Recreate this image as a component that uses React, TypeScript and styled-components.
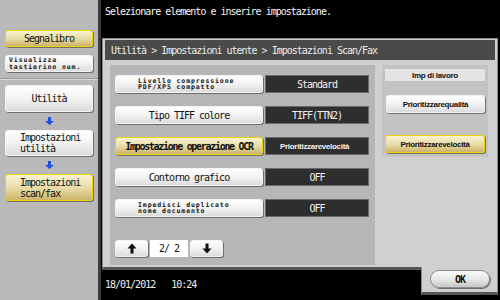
import React from 'react';
import styled, { createGlobalStyle, css } from 'styled-components';

const GlobalStyle = createGlobalStyle`
  html, body {
    margin: 0;
    padding: 0;
    background: #000;
  }
  #root {
    width: 500px;
    height: 300px;
    overflow: hidden;
  }
`;

const mono = css`
  font-family: "DejaVu Sans Mono", monospace;
  font-size: 10px;
  letter-spacing: -1px;
`;

const tiny = css`
  font-family: "DejaVu Sans Mono", monospace;
  font-size: 6.5px;
  font-weight: bold;
  line-height: 6.5px;
  letter-spacing: 0.9px;
`;

const Screen = styled.div`
  display: flex;
  width: 500px;
  height: 300px;
  background: #000;
`;

const Sidebar = styled.div`
  width: 101px;
  box-sizing: border-box;
  border-right: 3px solid #3c3c3c;
  background: #b9b9b9;
  display: flex;
  flex-direction: column;
  padding-top: 30px;
`;

const SideGroup = styled.div`
  display: flex;
  flex-direction: column;
  align-items: center;
  gap: 8px;
  padding: 0 5px 6px 5px;
`;

const Divider = styled.div`
  height: 0;
  border-top: 1px solid #999;
  border-bottom: 1px solid #d6d6d6;
  margin-bottom: 5px;
`;

interface BtnProps {
  $active?: boolean;
}

const btnSkin = css<BtnProps>`
  box-sizing: border-box;
  border-radius: 3px;
  color: #111;
  border: 1px solid ${(p) => (p.$active ? '#f0d400' : '#f4f4f4')};
  background: ${(p) =>
    p.$active
      ? 'linear-gradient(#faf3d2, #e6d9a4 55%, #cdb36a)'
      : 'linear-gradient(#ffffff, #f2f2f2 50%, #dcdcdc)'};
  box-shadow: 1px 1px 0 #6e6e6e;
`;

const SideButton = styled.div<BtnProps & { $h: number; $left?: boolean }>`
  ${btnSkin};
  ${mono};
  width: 88px;
  height: ${(p) => p.$h}px;
  display: flex;
  flex-direction: column;
  justify-content: center;
  align-items: ${(p) => (p.$left ? 'flex-start' : 'center')};
  padding-left: ${(p) => (p.$left ? '14px' : '0')};
  line-height: 11px;
`;

const TinyText = styled.div`
  ${tiny};
  text-align: left;
  width: 80px;
`;

const FlowArrow = styled.svg`
  display: block;
  margin: -3px 0;
`;

const Main = styled.div`
  flex: 1;
  display: flex;
  flex-direction: column;
  padding-left: 1px;
  padding-right: 2px;
`;

const Message = styled.div`
  ${mono};
  color: #f4f4f4;
  height: 38px;
  padding: 6px 0 0 3px;
  box-sizing: border-box;
`;

const Dialog = styled.div`
  display: flex;
  flex-direction: column;
`;

const Panel = styled.div`
  height: 232px;
  box-sizing: border-box;
  background: #d0d0d0;
  border: 1px solid #8a8a8a;
  border-bottom: 3px solid #555;
  padding: 1px 1px 0 1px;
  display: flex;
  flex-direction: column;
`;

const TitleBar = styled.div`
  ${mono};
  height: 20px;
  background: #4a4a4a;
  color: #ececec;
  display: flex;
  align-items: center;
  padding-left: 6px;
  margin: 0 1px;
`;

const Body = styled.div`
  display: flex;
  gap: 7px;
  padding: 5px 0 0 6px;
`;

const ListPanel = styled.div`
  width: 265px;
  height: 200px;
  box-sizing: border-box;
  background: #b6b6b6;
  padding: 10px 6px 0 5px;
  display: flex;
  flex-direction: column;
  gap: 13px;
`;

const Row = styled.div`
  display: flex;
  gap: 2px;
  height: 18px;
`;

const ItemButton = styled.div<BtnProps>`
  ${btnSkin};
  ${mono};
  width: 148px;
  display: flex;
  align-items: center;
  justify-content: center;
  flex-direction: column;
  font-weight: ${(p) => (p.$active ? 'bold' : 'normal')};
  letter-spacing: ${(p) => (p.$active ? '-1.3px' : '-1px')};
`;

const ItemTiny = styled.div`
  ${tiny};
  text-align: left;
  width: 104px;
  padding-left: 2px;
`;

const sansBold = css`
  font-family: "Liberation Sans", sans-serif;
  font-size: 8px;
  font-weight: bold;
  letter-spacing: -0.3px;
`;

const Value = styled.div<{ $sans?: boolean }>`
  width: 104px;
  box-sizing: border-box;
  background: #2e2e2e;
  border: 1px solid #6a6a6a;
  color: #f2f2f2;
  display: flex;
  align-items: center;
  justify-content: ${(p) => (p.$sans ? 'flex-start' : 'center')};
  padding-left: ${(p) => (p.$sans ? '14px' : '0')};
  ${(p) =>
    p.$sans
      ? css`
          ${sansBold};
          word-spacing: -2px;
        `
      : mono};
`;

const Pager = styled.div`
  display: flex;
  gap: 2px;
  height: 17px;
  margin-top: 10px;
`;

const PageButton = styled.div`
  ${btnSkin};
  width: 33px;
  display: flex;
  align-items: center;
  justify-content: center;
`;

const PageCount = styled.div`
  ${mono};
  width: 38px;
  background: #fff;
  display: flex;
  align-items: center;
  justify-content: center;
  color: #111;
`;

const JobPanel = styled.div`
  width: 106px;
  height: 92px;
  box-sizing: border-box;
  background: #c3c3c3;
  padding: 4px 3px;
  display: flex;
  flex-direction: column;
`;

const JobLabel = styled.div`
  ${sansBold};
  height: 12px;
  background: #e4e4e4;
  display: flex;
  align-items: center;
  justify-content: center;
  color: #111;
`;

const JobButton = styled.div<BtnProps & { $gap: number }>`
  ${btnSkin};
  ${sansBold};
  word-spacing: -2px;
  height: 18px;
  margin-top: ${(p) => p.$gap}px;
  margin-left: ${(p) => (p.$active ? '0' : '1px')};
  display: flex;
  align-items: center;
  justify-content: center;
`;

const Footer = styled.div`
  display: flex;
  height: 29px;
`;

const Clock = styled.div`
  ${mono};
  flex: 1;
  color: #f0f0f0;
  display: flex;
  gap: 16px;
  padding: 9px 0 0 3px;
`;

const OkTab = styled.div`
  width: 77px;
  height: 28px;
  margin-top: -3px;
  box-sizing: border-box;
  background: #d0d0d0;
  border: 1px solid #8a8a8a;
  border-top: none;
  border-bottom: 3px solid #555;
  display: flex;
  justify-content: flex-end;
  padding: 3px 7px 0 0;
`;

const OkButton = styled.div`
  ${mono};
  font-weight: bold;
  width: 60px;
  height: 18px;
  box-sizing: border-box;
  border-radius: 9px;
  border: 1px solid #8c8c8c;
  background: linear-gradient(#fafafa, #e8e8e8 50%, #c8c8c8);
  box-shadow: 1px 1px 0 #6a6a6a;
  display: flex;
  align-items: center;
  justify-content: center;
  color: #111;
`;

const BlueArrow = () => (
  <FlowArrow width="9" height="8" viewBox="0 0 9 8">
    <path d="M3 0 H6 V4 H9 L4.5 8 L0 4 H3 Z" fill="#1d4fe0" />
  </FlowArrow>
);

const PageArrow = ({ down }: { down?: boolean }) => (
  <svg width="10" height="11" viewBox="0 0 10 11" style={down ? { transform: 'rotate(180deg)' } : undefined}>
    <path d="M5 0.5 L9.5 5.5 H6.5 V10.5 H3.5 V5.5 H0.5 Z" fill="#111" />
  </svg>
);

const rows: { label: React.ReactNode; value: string; active?: boolean; sans?: boolean }[] = [
  {
    label: (
      <ItemTiny>
        Livello compressione
        <br />
        PDF/XPS compatto
      </ItemTiny>
    ),
    value: 'Standard',
  },
  { label: 'Tipo TIFF colore', value: 'TIFF(TTN2)' },
  { label: 'Impostazione operazione OCR', value: 'Prioritizzare velocità', active: true, sans: true },
  { label: 'Contorno grafico', value: 'OFF' },
  {
    label: (
      <ItemTiny>
        Impedisci duplicato
        <br />
        nome documento
      </ItemTiny>
    ),
    value: 'OFF',
  },
];

export default function App() {
  return (
    <>
      <GlobalStyle />
      <Screen>
        <Sidebar>
          <SideGroup>
            <SideButton $active $h={17}>Segnalibro</SideButton>
            <SideButton $h={17}>
              <TinyText>
                Visualizza
                <br />
                tastierino num.
              </TinyText>
            </SideButton>
          </SideGroup>
          <Divider />
          <SideGroup>
            <SideButton $h={27}>Utilità</SideButton>
            <BlueArrow />
            <SideButton $h={26} $left>
              <div>Impostazioni</div>
              <div>utilità</div>
            </SideButton>
            <BlueArrow />
            <SideButton $active $h={27} $left>
              <div>Impostazioni</div>
              <div>scan/fax</div>
            </SideButton>
          </SideGroup>
        </Sidebar>
        <Main>
          <Message>Selezionare elemento e inserire impostazione.</Message>
          <Dialog>
            <Panel>
              <TitleBar>Utilità &gt; Impostazioni utente &gt; Impostazioni Scan/Fax</TitleBar>
              <Body>
                <ListPanel>
                  {rows.map((r, i) => (
                    <Row key={i}>
                      <ItemButton $active={r.active}>{r.label}</ItemButton>
                      <Value $sans={r.sans}>{r.value}</Value>
                    </Row>
                  ))}
                  <Pager>
                    <PageButton>
                      <PageArrow />
                    </PageButton>
                    <PageCount>2/ 2</PageCount>
                    <PageButton>
                      <PageArrow down />
                    </PageButton>
                  </Pager>
                </ListPanel>
                <JobPanel>
                  <JobLabel>Imp di lavoro</JobLabel>
                  <JobButton $gap={14}>Prioritizzare qualità</JobButton>
                  <JobButton $gap={22} $active>
                    Prioritizzare velocità
                  </JobButton>
                </JobPanel>
              </Body>
            </Panel>
            <Footer>
              <Clock>
                <span>18/01/2012</span>
                <span>10:24</span>
              </Clock>
              <OkTab>
                <OkButton>OK</OkButton>
              </OkTab>
            </Footer>
          </Dialog>
        </Main>
      </Screen>
    </>
  );
}
